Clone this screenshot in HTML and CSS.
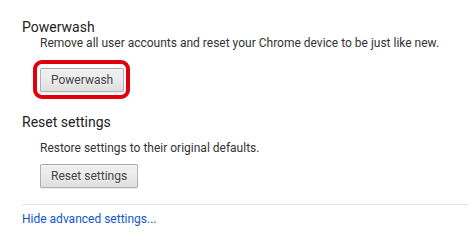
FILE: index.html
```html
<!DOCTYPE html>
<html lang="en">
<head>
    <meta charset="UTF-8">
    <title>Settings</title>
    <link rel="stylesheet" href="styles.css">
</head>
<body>
    <!-- Powerwash -->
    <section class="settings-section powerwash">
        <h3>Powerwash</h3>
        <div class="section-body">
            <p class="desc">Remove all user accounts and reset your Chrome device to be just like new.</p>
            <span class="highlight"><button class="btn">Powerwash</button></span>
        </div>
    </section>

    <!-- Reset settings -->
    <section class="settings-section reset">
        <h3>Reset settings</h3>
        <div class="section-body">
            <p class="desc">Restore settings to their original defaults.</p>
            <button class="btn">Reset settings</button>
        </div>
    </section>

    <div class="footer">
        <a href="#" class="link">Hide advanced settings...</a>
    </div>
</body>
</html>
```

FILE: styles.css
```css
/* base */
body {
    margin: 0;
    padding: 19px 1px 0 22px;
    font-family: Roboto, "Liberation Sans", sans-serif;
    font-size: 12px;
    color: #333;
    background: #fff;
}

/* sections */
.settings-section h3 {
    margin: 0;
    font-size: 14px;
    font-weight: 400;
    line-height: 16px;
    color: #222;
}

.section-body {
    padding-left: 18px;
}

.desc {
    margin: 0;
    line-height: 16px;
}

.powerwash .desc {
    margin-bottom: 9px;
}

.reset {
    margin-top: 15px;
}

.reset h3 {
    margin-bottom: 10px;
}

.reset .desc {
    margin-bottom: 8px;
}

/* buttons */
.btn {
    display: block;
    height: 24px;
    padding: 0 10px;
    font-family: inherit;
    font-size: 12px;
    color: #444;
    background-image: linear-gradient(#ededed, #ededed 38%, #dedede);
    border: 1px solid rgba(0, 0, 0, 0.25);
    border-radius: 2px;
    box-shadow: 0 1px 0 rgba(0, 0, 0, 0.08), inset 0 1px 2px rgba(255, 255, 255, 0.75);
    text-shadow: 0 1px 0 #f0f0f0;
}

/* red annotation ring */
.highlight {
    display: inline-block;
    margin-left: -7px;
    padding: 4px 2px 3px 3px;
    border: 4px solid #e0000b;
    border-radius: 9px;
}

/* footer */
.footer {
    margin-top: 16px;
    border-top: 1px solid #e5e5e5;
    padding-top: 6px;
}

.link {
    color: #15c;
    text-decoration: none;
    line-height: 16px;
}
```
